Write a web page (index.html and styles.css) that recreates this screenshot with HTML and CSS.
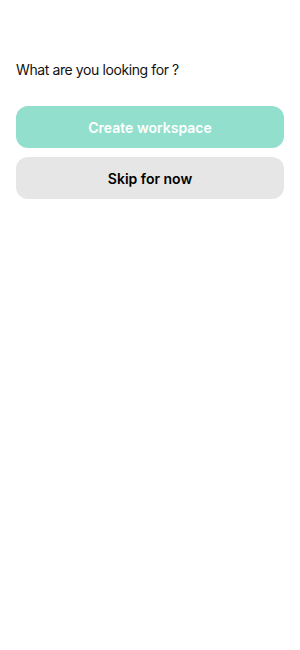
FILE: index.html
```html
<!DOCTYPE html>
<html>
<head>
<meta charset="utf-8">
<link rel="stylesheet" href="styles.css">
</head>
<body>
<main class="screen">
  <p class="question">What are you looking for ?</p>
  <div class="actions">
    <button class="btn btn-primary">Create workspace</button>
    <button class="btn btn-secondary">Skip for now</button>
  </div>
</main>
</body>
</html>
```
FILE: styles.css
```css
html, body {
  margin: 0;
  padding: 0;
  background: #ffffff;
}
body {
  font-family: Inter, "Noto Sans", sans-serif;
  color: #111111;
}
.screen {
  padding: 60px 16px 0 16px;
}
.question {
  margin: 0;
  font-size: 14px;
  line-height: 20px;
  font-weight: 400;
  letter-spacing: -0.4px;
}
.actions {
  margin-top: 26px;
  display: flex;
  flex-direction: column;
  gap: 9px;
}
.btn {
  display: block;
  width: 100%;
  height: 42px;
  border: none;
  border-radius: 12px;
  font-family: Inter, "Noto Sans", sans-serif;
  font-size: 14px;
  font-weight: 600;
  padding: 0;
}
.btn-primary {
  background: #92dfcd;
  color: #ffffff;
}
.btn-secondary {
  background: #e6e6e6;
  color: #000000;
}
```
